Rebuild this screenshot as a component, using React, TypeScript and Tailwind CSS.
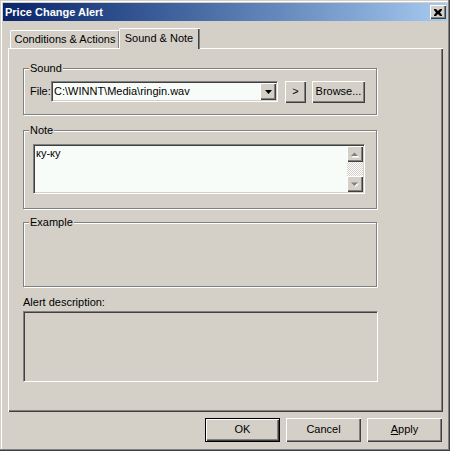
import React from "react";

const raised =
  "bg-[#d4d0c8] shadow-[inset_1px_1px_0_#fff,inset_-1px_-1px_0_#404040,inset_-2px_-2px_0_#808080]";
const sunken =
  "border border-t-[#808080] border-l-[#808080] border-r-white border-b-white shadow-[inset_1px_1px_0_#404040,inset_-1px_-1px_0_#d4d0c8]";
const etched =
  "relative border border-[#808080] shadow-[inset_1px_1px_0_#fff,1px_1px_0_#fff]";

function GroupLabel({ text }: { text: string }) {
  return (
    <span className="absolute -top-[7px] left-[5px] px-[1px] bg-[#d4d0c8] leading-[13px]">
      {text}
    </span>
  );
}

function ArrowGray({ up }: { up: boolean }) {
  return (
    <svg width="8" height="5" viewBox="0 0 8 5" className="overflow-visible">
      {up ? (
        <>
          <polygon points="4.5,1.5 8.5,5.5 0.5,5.5" fill="#fff" />
          <polygon points="3.5,0.5 7,4 0,4" fill="#808080" />
        </>
      ) : (
        <>
          <polygon points="1,1.5 8,1.5 4.5,5" fill="#fff" />
          <polygon points="0,0.5 7,0.5 3.5,4" fill="#808080" />
        </>
      )}
    </svg>
  );
}

export default function App() {
  return (
    <div className="w-[450px] h-[451px] bg-[#d4d0c8] p-[3px] flex flex-col font-['Liberation_Sans',Arial,sans-serif] text-[11px] leading-[13px] text-black shadow-[inset_-1px_-1px_0_#404040,inset_-2px_-2px_0_#808080,inset_1px_1px_0_#d4d0c8,inset_2px_2px_0_#fff] select-none">
      {/* Title bar */}
      <div className="h-[18px] flex items-center justify-between pl-[2px] pr-[1px] bg-gradient-to-r from-[#0a246a] to-[#a6caf0]">
        <span className="text-white font-bold text-[11px] leading-[13px]">
          Price Change Alert
        </span>
        <div className={`w-[16px] h-[14px] flex items-center justify-center ${raised}`}>
          <svg width="8" height="7" viewBox="0 0 8 7">
            <path d="M0 0h2l2 2 2-2h2v1L6 3.5 8 6v1H6L4 5 2 7H0V6l2-2.5L0 1z" fill="#000" />
          </svg>
        </div>
      </div>

      {/* Tabs + panel */}
      <div className="pl-[5px] pt-[7px] flex flex-col">
        <div className="flex items-start h-[20px] pl-[2px]">
          <div className="mt-[2px] h-[18px] w-[109px] flex items-center justify-center pb-[1px] bg-[#d4d0c8] border-l border-t border-white rounded-tl-[2px] shadow-[inset_-1px_0_0_#808080,1px_0_0_#404040]">
            Conditions &amp; Actions
          </div>
          <div className="relative z-10 h-[21px] w-[81px] flex items-start justify-center pt-[3px] bg-[#d4d0c8] border-l border-t border-white rounded-tl-[2px] shadow-[inset_-1px_0_0_#808080,inset_-2px_0_0_#404040] pr-[2px]">
            Sound &amp; Note
          </div>
        </div>
        <div className="w-[435px] h-[364px] bg-[#d4d0c8] shadow-[inset_1px_1px_0_#fff,inset_-1px_-1px_0_#404040,inset_-2px_-2px_0_#808080] pl-[15px] pt-[20px] flex flex-col">
          {/* Sound */}
          <div className={`${etched} w-[354px] h-[47px] pl-[6px] pt-[12px]`}>
            <GroupLabel text="Sound" />
            <div className="flex items-start">
              <span className="mt-[4px] w-[21px]">File:</span>
              <div className={`w-[227px] h-[21px] bg-[#f8fcf8] flex items-center justify-between ${sunken}`}>
                <span className="pl-[2px] leading-[13px]">C:\WINNT\Media\ringin.wav</span>
                <div className={`w-[16px] h-[17px] mr-[1px] flex items-center justify-center ${raised}`}>
                  <svg width="7" height="4" viewBox="0 0 7 4">
                    <polygon points="0,0 7,0 3.5,4" fill="#000" />
                  </svg>
                </div>
              </div>
              <div className={`ml-[7px] w-[21px] h-[22px] flex items-center justify-center pb-[1px] ${raised}`}>
                &gt;
              </div>
              <div className={`ml-[6px] w-[53px] h-[22px] flex items-center justify-center pb-[1px] ${raised}`}>
                Browse...
              </div>
            </div>
          </div>

          {/* Note */}
          <div className={`${etched} mt-[15px] w-[354px] h-[79px] pl-[9px] pt-[13px]`}>
            <GroupLabel text="Note" />
            <div className={`w-[332px] h-[50px] bg-[#f8fcf8] flex ${sunken}`}>
              <div className="flex-1 pl-[2px] pt-[2px]">ку-ку</div>
              <div className="w-[16px] mt-[1px] mb-[1px] mr-[1px] flex flex-col bg-[repeating-conic-gradient(#d4d0c8_0_25%,#fff_0_50%)] bg-[length:2px_2px]">
                <div className={`h-[16px] flex items-center justify-center ${raised}`}>
                  <ArrowGray up />
                </div>
                <div className="flex-1" />
                <div className={`h-[16px] flex items-center justify-center ${raised}`}>
                  <ArrowGray up={false} />
                </div>
              </div>
            </div>
          </div>

          {/* Example */}
          <div className={`${etched} mt-[13px] w-[354px] h-[65px]`}>
            <GroupLabel text="Example" />
          </div>

          <div className="mt-[9px]">Alert description:</div>
          <div className="mt-[2px] w-[355px] h-[71px] bg-[#d4d0c8] border border-t-[#808080] border-l-[#808080] border-r-white border-b-white shadow-[inset_1px_1px_0_#404040,inset_-1px_-1px_0_#d4d0c8]" />
        </div>
      </div>

      {/* Buttons */}
      <div className="mt-[6px] flex justify-end gap-[6px] pr-[5px]">
        <div className="w-[75px] h-[24px] border border-black flex">
          <div className={`flex-1 flex items-center justify-center pb-[1px] ${raised}`}>OK</div>
        </div>
        <div className={`w-[75px] h-[24px] flex items-center justify-center pb-[1px] ${raised}`}>
          Cancel
        </div>
        <div className={`w-[75px] h-[24px] flex items-center justify-center pb-[1px] ${raised}`}>
          <span>
            <span className="underline">A</span>pply
          </span>
        </div>
      </div>
    </div>
  );
}
